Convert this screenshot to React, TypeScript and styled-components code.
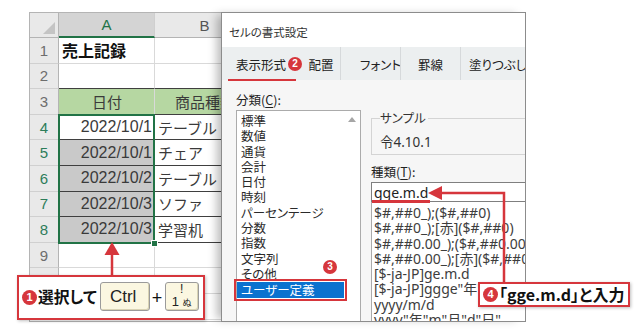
import React from 'react';
import styled, { createGlobalStyle, css } from 'styled-components';

const RED = '#d6363c';
const GREEN = '#217346';
const JP = `"Noto Sans CJK JP", sans-serif`;
const UI = `"Noto Sans", "Noto Sans CJK JP", sans-serif`;
const XL = `"Liberation Sans", "Noto Sans CJK JP", sans-serif`;

const Global = createGlobalStyle`
  html, body { margin: 0; padding: 0; background: #fff; }
  body { font-family: ${UI}; }
  * { box-sizing: border-box; }
`;

const Stage = styled.div`
  position: relative;
  width: 638px;
  height: 331px;
  overflow: hidden;
  background: #fff;
  padding: 12px 0 0 29px;
`;

/* ---------- spreadsheet ---------- */
const Sheet = styled.div`
  display: grid;
  grid-template-columns: 29px 96px 100px;
  grid-template-rows: 25px repeat(11, 25.6px);
  width: 225px;
  height: 310px;
  overflow: hidden;
  border: 1px solid #b4b4b4;
  border-right: none;
  background: #fff;
  font-family: ${XL};
`;

type Pos = { $r: number; $c: number };

const place = css<Pos>`
  grid-row: ${(p) => p.$r};
  grid-column: ${(p) => p.$c};
`;

const Corner = styled.div<Pos>`
  ${place};
  position: relative;
  background: #e9e9e9;
  border-right: 1px solid #b4b4b4;
  border-bottom: 1px solid #b4b4b4;
  &::after {
    content: '';
    position: absolute;
    right: 3px;
    bottom: 3px;
    border-left: 12px solid transparent;
    border-bottom: 12px solid #c4c4c4;
  }
`;

const ColHead = styled.div<Pos & { $active?: boolean }>`
  ${place};
  display: flex;
  align-items: center;
  justify-content: center;
  font-size: 15px;
  background: ${(p) => (p.$active ? '#d4d4d4' : '#e9e9e9')};
  color: ${(p) => (p.$active ? GREEN : '#555')};
  border-right: 1px solid #cfcfcf;
  border-bottom: ${(p) => (p.$active ? `2px solid ${GREEN}` : '1px solid #b4b4b4')};
`;

const RowHead = styled.div<Pos & { $active?: boolean }>`
  ${place};
  display: flex;
  align-items: center;
  justify-content: center;
  font-size: 15px;
  background: #e9e9e9;
  color: ${(p) => (p.$active ? '#2d7d5a' : '#6d6d6d')};
  border-right: 1px solid #b4b4b4;
  border-bottom: 1px solid #d0d0d0;
`;

type Fill = 'none' | 'green' | 'sel';

const DataCell = styled.div<
  Pos & { $fill?: Fill; $align?: 'left' | 'center' | 'right'; $bold?: boolean; $dark?: boolean; $jp?: boolean }
>`
  ${place};
  display: flex;
  align-items: center;
  justify-content: ${(p) => (p.$align === 'right' ? 'flex-end' : p.$align === 'center' ? 'center' : 'flex-start')};
  padding: 0 2px 0 3px;
  overflow: hidden;
  white-space: nowrap;
  font-family: ${(p) => (p.$jp ? JP : XL)};
  font-size: ${(p) => (p.$bold ? '16px' : p.$jp ? '15px' : '16px')};
  font-weight: ${(p) => (p.$bold ? 700 : 400)};
  color: ${(p) => (p.$bold ? '#111' : '#3a3a3a')};
  background: ${(p) => (p.$fill === 'green' ? '#b6d7a2' : p.$fill === 'sel' ? '#c9c9c9' : '#fff')};
  border-right: 1px solid #d9d9d9;
  border-bottom: 1px solid ${(p) => (p.$dark ? '#3f3f3f' : '#d9d9d9')};
`;

const Selection = styled.div`
  grid-row: 5 / 10;
  grid-column: 2;
  position: relative;
  border: 2px solid ${GREEN};
  margin: -1px 0 -1px -1px;
  pointer-events: none;
`;

const FillHandle = styled.span`
  position: absolute;
  right: -5px;
  bottom: -5px;
  width: 7px;
  height: 7px;
  background: ${GREEN};
  border: 1px solid #fff;
`;

/* ---------- dialog ---------- */
const Dialog = styled.div`
  position: absolute;
  left: 221px;
  top: 12px;
  width: 305px;
  height: 310px;
  display: flex;
  flex-direction: column;
  overflow: hidden;
  background: #f6f6f6;
  border: 1px solid #8c8c8c;
  box-shadow: -7px 0 9px -3px rgba(0, 0, 0, 0.28);
  font-family: ${JP};
  font-feature-settings: 'palt';
  color: #222;
`;

const TitleBar = styled.div`
  height: 34px;
  flex: none;
  display: flex;
  align-items: center;
  padding: 4px 0 0 7px;
  background: #fff;
  font-size: 11.5px;
  color: #333;
`;

const TabStrip = styled.div`
  height: 33px;
  flex: none;
  display: flex;
  align-items: stretch;
  padding-left: 6px;
  background: #eceff0;
`;

const Tab = styled.div<{ $w: number; $active?: boolean; $sep?: boolean; $pl?: number }>`
  position: relative;
  width: ${(p) => p.$w}px;
  flex: none;
  display: flex;
  align-items: center;
  justify-content: ${(p) => (p.$active || p.$pl ? 'flex-start' : 'center')};
  padding-left: ${(p) => (p.$active ? 8 : p.$pl ?? 0)}px;
  gap: 2px;
  font-size: 12.5px;
  white-space: nowrap;
  padding-top: 1px;
  border-left: ${(p) => (p.$sep ? '1px solid #d6d9db' : 'none')};
  ${(p) =>
    p.$active &&
    css`
      &::after {
        content: '';
        position: absolute;
        left: 0;
        bottom: -1px;
        width: 68px;
        height: 2.5px;
        background: ${RED};
      }
    `}
`;

const Badge = styled.span<{ $size?: number }>`
  display: inline-flex;
  align-items: center;
  justify-content: center;
  flex: none;
  width: ${(p) => p.$size ?? 14}px;
  height: ${(p) => p.$size ?? 14}px;
  border-radius: 50%;
  background: ${RED};
  color: #fff;
  font-family: ${XL};
  font-weight: 700;
  font-size: ${(p) => ((p.$size ?? 14) > 14 ? 11 : 10)}px;
  line-height: 1;
`;

const Body = styled.div`
  flex: 1;
  min-height: 0;
  display: flex;
  gap: 10px;
  padding-left: 14px;
`;

const LeftCol = styled.div`
  width: 125px;
  flex: none;
  display: flex;
  flex-direction: column;
`;

const Label = styled.div<{ $mt: number }>`
  margin-top: ${(p) => p.$mt}px;
  line-height: 16px;
  font-size: 12.5px;
  color: #222;
  u { text-decoration: underline; text-underline-offset: 2px; }
`;

const CategoryList = styled.div`
  position: relative;
  flex: 1;
  margin-top: 2px;
  display: grid;
  grid-template-columns: 1fr 16px;
  background: #fff;
  border: 1px solid #ababab;
  border-bottom: none;
`;

const Items = styled.div`
  padding-top: 2px;
`;

const Item = styled.div<{ $selected?: boolean }>`
  height: 15.3px;
  line-height: 15.3px;
  padding-left: 4px;
  font-size: 12.5px;
  white-space: nowrap;
  color: ${(p) => (p.$selected ? '#fff' : '#2a2a2a')};
  background: ${(p) => (p.$selected ? '#0a72cf' : 'transparent')};
  ${(p) =>
    p.$selected &&
    css`
      outline: 2px solid ${RED};
      outline-offset: 1px;
      margin-top: 1px;
    `}
`;

const ScrollTrack = styled.div`
  display: flex;
  justify-content: center;
  padding-top: 6px;
`;

const UpArrow = styled.span`
  width: 0;
  height: 0;
  border-left: 4px solid transparent;
  border-right: 4px solid transparent;
  border-bottom: 5px solid #a6a6a6;
`;

const ListBadge = styled(Badge)`
  position: absolute;
  left: 86px;
  top: 149px;
`;

const RightCol = styled.div`
  width: 154px;
  flex: none;
  display: flex;
  flex-direction: column;
`;

const Group = styled.fieldset`
  margin: 30px 0 0;
  padding: 8px 8px 4px;
  border: 1px solid #d4d4d4;
  border-right: none;
  min-width: 0;
  legend {
    padding: 0 2px 0 0;
    line-height: 16px;
    font-size: 12.5px;
    color: #333;
  }
`;

const SampleValue = styled.div`
  line-height: 16px;
  font-size: 13.5px;
  color: #333;
  font-family: ${UI};
`;

const TypeInput = styled.div`
  margin-top: 2px;
  height: 20px;
  display: flex;
  align-items: center;
  padding-left: 2px;
  background: #fff;
  border: 1px solid #7f7f7f;
  border-right: none;
  font-family: ${UI};
  font-size: 14px;
  color: #222;
`;

const Marked = styled.span`
  position: relative;
  &::after {
    content: '';
    position: absolute;
    left: -2px;
    right: -2px;
    bottom: -1px;
    height: 2.5px;
    background: ${RED};
  }
`;

const FormatList = styled.div`
  flex: 1;
  padding: 3px 0 0 2px;
  background: #fff;
  border-left: 1px solid #ababab;
  overflow: hidden;
  font-family: ${UI};
  font-size: 14px;
  color: #3d3d3d;
  white-space: nowrap;
`;

const FormatLine = styled.div`
  height: 15.3px;
  line-height: 15.3px;
`;

/* ---------- annotations ---------- */
const Arrows = styled.svg`
  position: absolute;
  left: 0;
  top: 0;
  pointer-events: none;
`;

const Callout = styled.div<{ $x: number; $y: number; $w: number; $h: number }>`
  position: absolute;
  left: ${(p) => p.$x}px;
  top: ${(p) => p.$y}px;
  width: ${(p) => p.$w}px;
  height: ${(p) => p.$h}px;
  display: flex;
  align-items: center;
  padding-left: 3px;
  background: #fff;
  border: 2px solid ${RED};
  box-shadow: 1px 1px 3px rgba(0, 0, 0, 0.25);
  font-family: ${JP};
  font-feature-settings: 'palt';
  font-weight: 700;
  color: #111;
  white-space: nowrap;
`;

const CalloutText = styled.span<{ $size: number }>`
  flex: none;
  font-size: ${(p) => p.$size}px;
  line-height: 1.2;
  margin-left: 1px;
`;

const Key = styled.span<{ $w: number; $ml?: number }>`
  width: ${(p) => p.$w}px;
  height: 29px;
  margin: -3px 0 0 ${(p) => p.$ml ?? 0}px;
  flex: none;
  display: flex;
  flex-direction: column;
  align-items: center;
  justify-content: center;
  background: #fbf7e1;
  border: 1px solid #9a9a9a;
  border-radius: 3px;
  box-shadow: inset -1px -1px 0 #d8d2b4;
  font-family: ${XL};
  font-weight: 400;
  color: #222;
`;

const KeyText = styled.span`
  font-size: 17px;
  line-height: 1;
  margin-right: 3px;
`;

const KeySmall = styled.span<{ $size: number }>`
  font-size: ${(p) => p.$size}px;
  line-height: 1.05;
  font-family: ${XL};
  font-weight: 400;
`;

const Plus = styled.span`
  flex: none;
  width: 15px;
  text-align: center;
  font-family: ${XL};
  font-weight: 400;
  font-size: 18px;
  line-height: 1;
`;

const sheetRows: { n: number; a?: string; b?: string; kind?: 'title' | 'head' | 'data' }[] = [
  { n: 1, a: '売上記録', kind: 'title' },
  { n: 2 },
  { n: 3, a: '日付', b: '商品種類', kind: 'head' },
  { n: 4, a: '2022/10/1', b: 'テーブル', kind: 'data' },
  { n: 5, a: '2022/10/1', b: 'チェア', kind: 'data' },
  { n: 6, a: '2022/10/2', b: 'テーブル', kind: 'data' },
  { n: 7, a: '2022/10/3', b: 'ソファ', kind: 'data' },
  { n: 8, a: '2022/10/3', b: '学習机', kind: 'data' },
  { n: 9 },
  { n: 10 },
  { n: 11 },
];

const categories = [
  '標準', '数値', '通貨', '会計', '日付', '時刻', 'パーセンテージ',
  '分数', '指数', '文字列', 'その他', 'ユーザー定義',
];

const formats = [
  '$#,##0_);($#,##0)',
  '$#,##0_);[赤]($#,##0)',
  '$#,##0.00_);($#,##0.00)',
  '$#,##0.00_);[赤]($#,##0.00)',
  '[$-ja-JP]ge.m.d',
  '[$-ja-JP]ggge"年"m"月"d"日"',
  'yyyy/m/d',
  'yyyy"年"m"月"d"日"',
];

export default function App() {
  return (
    <Stage>
      <Global />
      <Sheet>
        <Corner $r={1} $c={1} />
        <ColHead $r={1} $c={2} $active>A</ColHead>
        <ColHead $r={1} $c={3}>B</ColHead>
        {sheetRows.map((row) => {
          const r = row.n + 1;
          const inTable = row.n >= 2 && row.n <= 8;
          const sel = row.n >= 5 && row.n <= 8;
          return (
            <React.Fragment key={row.n}>
              <RowHead $r={r} $c={1} $active={row.n >= 4 && row.n <= 8}>
                {row.n}
              </RowHead>
              <DataCell
                $r={r}
                $c={2}
                $dark={inTable}
                $bold={row.kind === 'title'}
                $jp={row.kind !== 'data'}
                $align={row.kind === 'data' ? 'right' : row.kind === 'head' ? 'center' : 'left'}
                $fill={row.kind === 'head' ? 'green' : sel ? 'sel' : 'none'}
              >
                {row.a}
              </DataCell>
              <DataCell
                $r={r}
                $c={3}
                $dark={inTable}
                $jp
                $align={row.kind === 'head' ? 'center' : 'left'}
                $fill={row.kind === 'head' ? 'green' : 'none'}
              >
                {row.b}
              </DataCell>
            </React.Fragment>
          );
        })}
        <Selection>
          <FillHandle />
        </Selection>
      </Sheet>

      <Dialog>
        <TitleBar>セルの書式設定</TitleBar>
        <TabStrip>
          <Tab $w={74} $active>
            表示形式
            <Badge>2</Badge>
          </Tab>
          <Tab $w={38}>配置</Tab>
          <Tab $w={60} $sep $pl={19}>フォント</Tab>
          <Tab $w={60} $sep>罫線</Tab>
          <Tab $w={70} $sep $pl={8}>塗りつぶし</Tab>
        </TabStrip>
        <Body>
          <LeftCol>
            <Label $mt={12}>
              分類(<u>C</u>):
            </Label>
            <CategoryList>
              <Items>
                {categories.map((c, i) => (
                  <Item key={c} $selected={i === categories.length - 1}>
                    {c}
                  </Item>
                ))}
              </Items>
              <ScrollTrack>
                <UpArrow />
              </ScrollTrack>
              <ListBadge>3</ListBadge>
            </CategoryList>
          </LeftCol>
          <RightCol>
            <Group>
              <legend>サンプル</legend>
              <SampleValue>令4.10.1</SampleValue>
            </Group>
            <Label $mt={9}>
              種類(<u>T</u>):
            </Label>
            <TypeInput>
              <Marked>gge.m.d</Marked>
            </TypeInput>
            <FormatList>
              {formats.map((f) => (
                <FormatLine key={f}>{f}</FormatLine>
              ))}
            </FormatList>
          </RightCol>
        </Body>
      </Dialog>

      <Arrows width={638} height={331} viewBox="0 0 638 331">
        <line x1={112} y1={253} x2={112} y2={276} stroke={RED} strokeWidth={2.5} />
        <polygon points="112,242 104.5,255 119.5,255" fill={RED} />
        <polyline points="504,284 504,193 440,193" fill="none" stroke={RED} strokeWidth={2.5} />
        <polygon points="428,193 442,186 442,200" fill={RED} />
      </Arrows>

      <Callout $x={17} $y={275} $w={188} $h={45}>
        <Badge $size={15}>1</Badge>
        <CalloutText $size={15.75}>選択して</CalloutText>
        <Key $w={50} $ml={3}>
          <KeyText>Ctrl</KeyText>
        </Key>
        <Plus>+</Plus>
        <Key $w={34}>
          <KeySmall $size={12}>!</KeySmall>
          <KeySmall $size={13}>
            1 <KeySmall $size={9}>ぬ</KeySmall>
          </KeySmall>
        </Key>
      </Callout>

      <Callout $x={478} $y={282} $w={152} $h={25}>
        <Badge $size={15}>4</Badge>
        <CalloutText $size={16}>「gge.m.d」と入力</CalloutText>
      </Callout>
    </Stage>
  );
}
